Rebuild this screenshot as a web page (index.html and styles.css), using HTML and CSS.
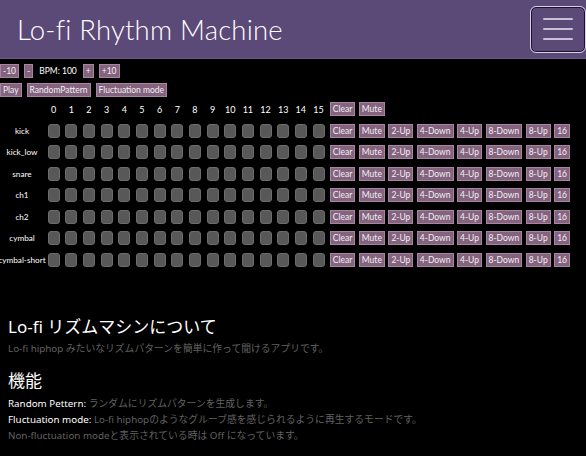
FILE: index.html
```html
<!DOCTYPE html>
<html lang="ja">
<head>
<meta charset="utf-8">
<title>Lo-fi Rhythm Machine</title>
<link rel="stylesheet" href="styles.css">
</head>
<body>
<header class="topbar">
  <h1 class="title">Lo-fi Rhythm Machine</h1>
  <button class="menu-btn" aria-label="menu">
    <span class="bar"></span><span class="bar"></span><span class="bar"></span>
  </button>
</header>
<main>
  <div class="controls">
    <button class="btn">-10</button>
    <button class="btn">-</button>
    <span class="bpm">BPM: 100</span>
    <button class="btn">+</button>
    <button class="btn">+10</button>
  </div>
  <div class="controls">
    <button class="btn">Play</button>
    <button class="btn">RandomPattern</button>
    <button class="btn">Fluctuation mode</button>
  </div>
  <div class="seq head">
    <div class="label"></div>
    <div class="cells">
      <div class="num">0</div><div class="num">1</div><div class="num">2</div><div class="num">3</div><div class="num">4</div><div class="num">5</div><div class="num">6</div><div class="num">7</div><div class="num">8</div><div class="num">9</div><div class="num">10</div><div class="num">11</div><div class="num">12</div><div class="num">13</div><div class="num">14</div><div class="num">15</div>
    </div>
    <div class="ops"><button class="btn">Clear</button><button class="btn">Mute</button></div>
  </div>
  <div id="rows"></div>
  <section class="about">
    <h2 class="heading">Lo-fi リズムマシンについて</h2>
    <p class="lead muted">Lo-fi hiphop みたいなリズムパターンを簡単に作って聞けるアプリです。</p>
    <h2 class="heading">機能</h2>
    <div class="features">
      <p><span class="key">Random Pettern:</span> <span class="muted">ランダムにリズムパターンを生成します。</span></p>
      <p><span class="key">Fluctuation mode:</span> <span class="muted">Lo-fi hiphopのようなグルーブ感を感じられるように再生するモードです。</span></p>
      <p class="muted">Non-fluctuation modeと表示されている時は Off になっています。</p>
    </div>
  </section>
</main>
<script src="app.js"></script>
</body>
</html>
```
FILE: app.js
```js
(function () {
  var names = ["kick", "kick_low", "snare", "ch1", "ch2", "cymbal", "cymbal-short"];
  var ops = ["Clear", "Mute", "2-Up", "4-Down", "4-Up", "8-Down", "8-Up", "16"];
  var host = document.getElementById("rows");
  names.forEach(function (n) {
    var row = document.createElement("div");
    row.className = "seq";
    var l = document.createElement("div");
    l.className = "label";
    l.textContent = n;
    row.appendChild(l);
    var cells = document.createElement("div");
    cells.className = "cells";
    for (var i = 0; i < 16; i++) {
      var c = document.createElement("div");
      c.className = "cell";
      cells.appendChild(c);
    }
    row.appendChild(cells);
    var o = document.createElement("div");
    o.className = "ops";
    ops.forEach(function (t) {
      var b = document.createElement("button");
      b.className = "btn";
      b.textContent = t;
      o.appendChild(b);
    });
    row.appendChild(o);
    host.appendChild(row);
  });
})();
```
FILE: styles.css
```css
html, body {
  margin: 0;
  padding: 0;
  background: #000;
  color: #fff;
  font-family: "Noto Sans", "Noto Sans CJK JP", sans-serif;
}
.topbar {
  height: 58px;
  background: #5b4977;
  border-bottom: 1px solid #6b5a88;
  display: flex;
  align-items: center;
  justify-content: space-between;
  padding: 0 1px 0 17px;
}
.title {
  margin: 0;
  font-family: "Lato", sans-serif;
  font-weight: 300;
  font-size: 27.5px;
  letter-spacing: 0.2px;
  color: #fff;
}
.menu-btn {
  width: 54px;
  height: 45px;
  background: transparent;
  border: 1px solid #1c1230;
  outline: 1.5px solid #d8d0e4;
  border-radius: 5px;
  display: flex;
  flex-direction: column;
  align-items: center;
  justify-content: center;
  gap: 8px;
  padding: 0;
}
.bar {
  display: block;
  width: 30px;
  height: 2px;
  border-radius: 1px;
  background: #c9bfd9;
}
main {
  padding-top: 5px;
}
.controls {
  display: flex;
  align-items: center;
  gap: 5px;
  height: 14px;
  margin-bottom: 5px;
}
.btn {
  height: 14px;
  padding: 0 2px;
  margin: 0;
  font-family: "Lato", sans-serif;
  font-size: 8.5px;
  line-height: 12px;
  color: #f2eef2;
  background: #84637f;
  border: 1px solid #a7849f;
  border-radius: 0;
  white-space: nowrap;
}
.bpm {
  font-family: "Lato", sans-serif;
  font-size: 8.5px;
  color: #fff;
  padding: 0 1px;
}
.seq {
  display: flex;
  align-items: center;
  height: 14px;
  margin-top: 7.5px;
}
.seq.head {
  margin-top: 3px;
}
.label {
  flex: none;
  width: 44px;
  min-width: 0;
  font-family: "Lato", sans-serif;
  font-size: 8.2px;
  color: #fff;
  white-space: nowrap;
  display: flex;
  justify-content: center;
}
.cells {
  flex: none;
  display: grid;
  grid-template-columns: repeat(16, 12px);
  column-gap: 5.67px;
  margin-left: 3.67px;
  margin-right: 5.3px;
  align-items: center;
}
.num {
  text-align: center;
  font-family: "Lato", sans-serif;
  font-size: 9px;
  color: #fff;
  white-space: nowrap;
  display: flex;
  justify-content: center;
}
.cell {
  width: 12px;
  height: 14px;
  box-sizing: border-box;
  background: #585858;
  border: 1px solid #6c6c6c;
  border-radius: 3px;
}
.ops {
  display: flex;
  gap: 3.5px;
}
.about {
  padding: 48px 8px 0;
}
.heading {
  margin: 0;
  font-size: 17px;
  font-weight: 400;
  line-height: 24px;
  color: #fff;
}
.lead {
  margin: 2px 0 12px;
  font-size: 9.8px;
  line-height: 16px;
}
.features {
  margin-top: 3px;
}
.features p {
  margin: 0;
  font-size: 9.8px;
  line-height: 16px;
}
.key {
  color: #fff;
}
.muted {
  color: #626262;
}
```
